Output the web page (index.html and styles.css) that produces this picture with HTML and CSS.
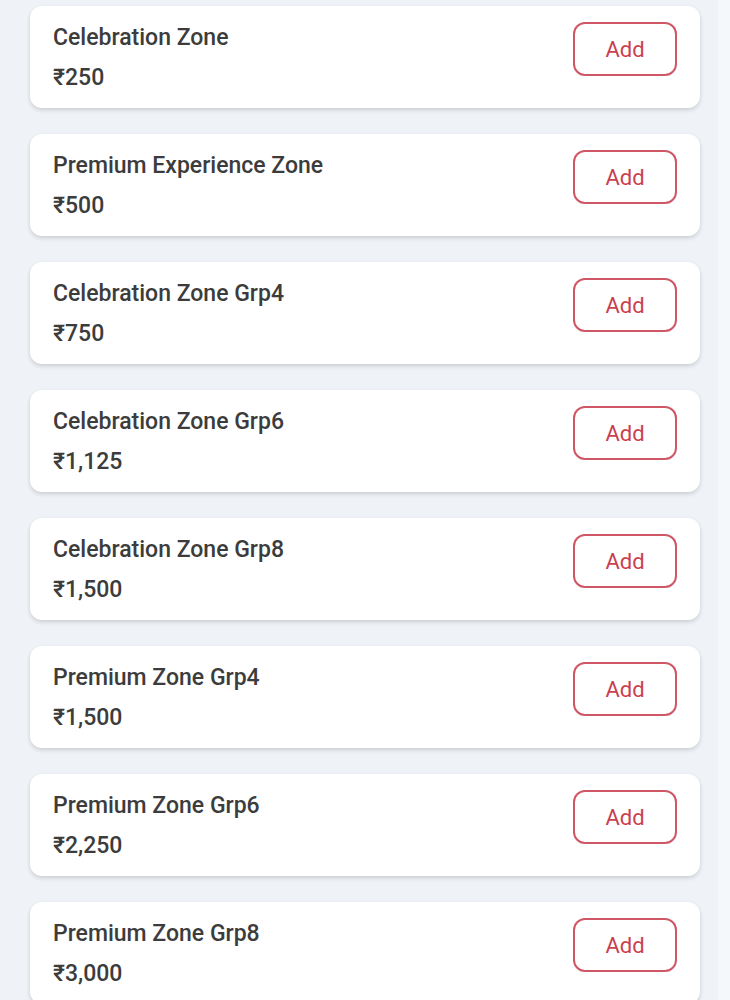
FILE: index.html
```html
<!DOCTYPE html>
<html lang="en">
<head>
    <meta charset="UTF-8">
    <meta name="viewport" content="width=device-width, initial-scale=1.0">
    <title>Zones</title>
    <link rel="stylesheet" href="styles.css">
</head>
<body>

    <div class="page">
        <div class="zone-list">
            <div class="zone-card">
                <div class="zone-info">
                    <div class="zone-name">Celebration Zone</div>
                    <div class="zone-price">₹250</div>
                </div>
                <button class="add-button">Add</button>
            </div>

            <div class="zone-card">
                <div class="zone-info">
                    <div class="zone-name">Premium Experience Zone</div>
                    <div class="zone-price">₹500</div>
                </div>
                <button class="add-button">Add</button>
            </div>

            <div class="zone-card">
                <div class="zone-info">
                    <div class="zone-name">Celebration Zone Grp4</div>
                    <div class="zone-price">₹750</div>
                </div>
                <button class="add-button">Add</button>
            </div>

            <div class="zone-card">
                <div class="zone-info">
                    <div class="zone-name">Celebration Zone Grp6</div>
                    <div class="zone-price">₹1,125</div>
                </div>
                <button class="add-button">Add</button>
            </div>

            <div class="zone-card">
                <div class="zone-info">
                    <div class="zone-name">Celebration Zone Grp8</div>
                    <div class="zone-price">₹1,500</div>
                </div>
                <button class="add-button">Add</button>
            </div>

            <div class="zone-card">
                <div class="zone-info">
                    <div class="zone-name">Premium Zone Grp4</div>
                    <div class="zone-price">₹1,500</div>
                </div>
                <button class="add-button">Add</button>
            </div>

            <div class="zone-card">
                <div class="zone-info">
                    <div class="zone-name">Premium Zone Grp6</div>
                    <div class="zone-price">₹2,250</div>
                </div>
                <button class="add-button">Add</button>
            </div>

            <div class="zone-card">
                <div class="zone-info">
                    <div class="zone-name">Premium Zone Grp8</div>
                    <div class="zone-price">₹3,000</div>
                </div>
                <button class="add-button">Add</button>
            </div>
        </div>
        <div class="side-strip"></div>
    </div>

</body>
</html>
```

FILE: styles.css
```css
* {
    box-sizing: border-box;
    margin: 0;
    padding: 0;
    font-family: "Roboto", "Noto Sans", sans-serif;
}

body {
    background: #eff3f8;
    color: #333;
    overflow: hidden;
}

.page {
    display: flex;
    height: 1000px;
    overflow: hidden;
}

.zone-list {
    display: flex;
    flex-direction: column;
    gap: 26px;
    width: 718px;
    padding: 6px 18px 0 30px;
}

/* right edge strip */
.side-strip {
    flex: 1;
    background: #f5f8fb;
}

.zone-card {
    display: flex;
    flex-shrink: 0;
    justify-content: space-between;
    align-items: flex-start;
    height: 102px;
    padding: 16px 23px 16px 23px;
    background: #fff;
    border-radius: 12px;
    box-shadow: 0px 2px 4px rgba(0, 0, 0, 0.16);
}

.zone-info {
    display: flex;
    flex-direction: column;
    gap: 12px;
    padding-top: 2px;
}

.zone-name,
.zone-price {
    font-size: 23px;
    line-height: 28px;
    font-weight: 500;
    color: #3c3c3c;
}

.add-button {
    width: 104px;
    height: 54px;
    padding-top: 1px;
    font-size: 22px;
    color: #c8414f;
    background: #fff;
    border: 2px solid #cf5866;
    border-radius: 12px;
    cursor: pointer;
}
```
